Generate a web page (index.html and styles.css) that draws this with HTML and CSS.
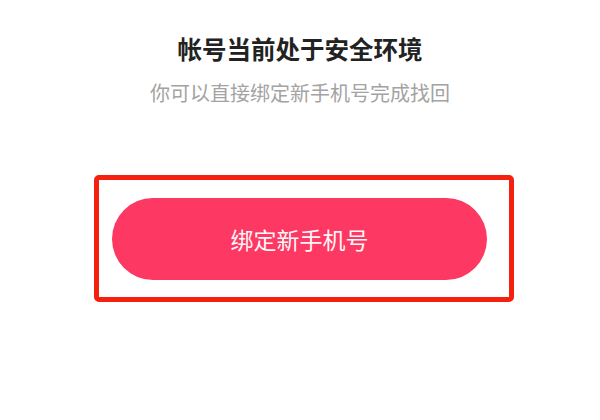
FILE: index.html
```html
<!DOCTYPE html>
<html lang="zh-CN">
<head>
<meta charset="utf-8">
<link rel="stylesheet" href="styles.css">
</head>
<body>
<main class="page">
  <h1 class="title">帐号当前处于安全环境</h1>
  <p class="subtitle">你可以直接绑定新手机号完成找回</p>
  <div class="highlight">
    <button class="bind-btn" type="button">绑定新手机号</button>
  </div>
</main>
</body>
</html>
```
FILE: styles.css
```css
html, body {
  margin: 0;
  padding: 0;
  background: #ffffff;
}
.page {
  width: 600px;
  height: 420px;
  display: flex;
  flex-direction: column;
  align-items: center;
  font-family: "Noto Sans CJK SC", "Noto Sans", sans-serif;
}
.title {
  margin: 34px 0 0;
  font-size: 24.5px;
  line-height: 30px;
  font-weight: 700;
  color: #222222;
}
.subtitle {
  margin: 16px 0 0;
  font-size: 20px;
  line-height: 26px;
  font-weight: 400;
  color: #a3a3a3;
}
.highlight {
  align-self: flex-start;
  margin: 69px 0 0 94px;
  width: 375px;
  padding: 18px 22px 17px 13px;
  border: 5px solid #f5200f;
  border-radius: 5px;
}
.bind-btn {
  display: flex;
  align-items: center;
  justify-content: center;
  width: 375px;
  height: 82px;
  padding: 0;
  border: none;
  border-radius: 41px;
  background: #fc3863;
  color: #fff6f8;
  font-family: inherit;
  font-size: 23px;
  font-weight: 400;
  letter-spacing: 0;
}
```
